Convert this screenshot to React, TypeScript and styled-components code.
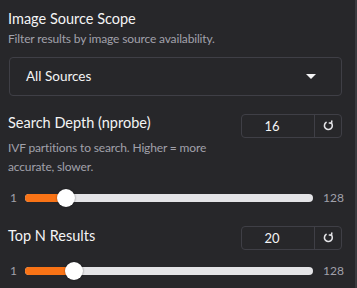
import React from "react";
import styled, { createGlobalStyle } from "styled-components";

const Global = createGlobalStyle`
  html, body { margin: 0; padding: 0; background: #27272a; }
  body { font-family: Lato, "Noto Sans", sans-serif; color: #f4f4f5; }
  * { box-sizing: border-box; }
`;

const Panel = styled.div`
  width: 357px;
  height: 288px;
  background: #27272a;
  border-right: 2px solid #3a3a3f;
  padding: 9px 13px 0 8px;
  display: flex;
  flex-direction: column;
  overflow: hidden;
`;

const Block = styled.section<{ $gap?: number }>`
  display: flex;
  flex-direction: column;
  margin-bottom: ${(p) => p.$gap ?? 0}px;
`;

const Title = styled.div<{ $top?: number }>`
  margin-top: ${(p) => p.$top ?? 0}px;
  font-size: 14.5px;
  line-height: 20px;
  color: #f4f4f5;
`;

const Info = styled.div<{ $top?: number; $width?: number }>`
  margin-top: ${(p) => p.$top ?? 0}px;
  width: ${(p) => (p.$width ? `${p.$width}px` : "auto")};
  font-size: 12px;
  letter-spacing: -0.15px;
  line-height: 19.5px;
  color: #a1a1aa;
`;

const Select = styled.div`
  margin-top: 8px;
  margin-left: 1px;
  height: 39px;
  border: 1px solid #3f3f46;
  border-radius: 4px;
  display: flex;
  align-items: center;
  justify-content: space-between;
  padding: 0 25px 0 16px;
  font-size: 13.5px;
  color: #f4f4f5;
`;

const Caret = styled.span`
  width: 0;
  height: 0;
  border-left: 5px solid transparent;
  border-right: 5px solid transparent;
  border-top: 5px solid #f4f4f5;
`;

const HeaderRow = styled.div`
  display: flex;
  justify-content: space-between;
  align-items: flex-start;
`;

const NumBox = styled.div<{ $top: number }>`
  margin-top: ${(p) => p.$top}px;
  width: 101px;
  height: 24px;
  border: 1px solid #3f3f46;
  border-radius: 4px;
  display: flex;
  flex-shrink: 0;
`;

const NumValue = styled.div`
  flex: 1;
  display: flex;
  align-items: center;
  justify-content: center;
  padding-right: 12px;
  font-size: 13px;
  color: #f4f4f5;
  border-right: 1px solid #3f3f46;
`;

const Reset = styled.div`
  width: 26px;
  display: flex;
  align-items: center;
  justify-content: center;
  color: #e4e4e7;
`;

const Spacer = styled.div<{ $h: number }>`
  height: ${(p) => p.$h}px;
`;

const SliderRow = styled.div`
  display: flex;
  align-items: center;
  height: 18px;
  font-size: 12px;
  color: #a1a1aa;
  margin-left: 2px;
`;

const Bound = styled.span<{ $w: number }>`
  width: ${(p) => p.$w}px;
  flex-shrink: 0;
`;

const Track = styled.div`
  position: relative;
  flex: 1;
  height: 8px;
  border-radius: 4px;
  background: #e4e4e7;
  margin-right: 10px;
`;

const Fill = styled.div`
  position: absolute;
  left: 0;
  top: 0;
  bottom: 0;
  border-radius: 4px;
  background: #f97316;
`;

const Thumb = styled.div`
  position: absolute;
  top: 50%;
  width: 18px;
  height: 18px;
  margin-left: -9px;
  margin-top: -9px;
  border-radius: 50%;
  background: #ffffff;
  box-shadow: 0 0 2px rgba(0, 0, 0, 0.5);
`;

function ResetIcon() {
  return (
    <svg width="11" height="11" viewBox="0 0 12 12" fill="none" stroke="currentColor" strokeWidth="1.7" strokeLinecap="round" strokeLinejoin="round">
      <path d="M3.4 2.6 A4.3 4.3 0 1 0 9 3.2" />
      <path d="M9.6 1.2 L9.2 3.6 L6.9 3.3" />
    </svg>
  );
}

function Slider({ value, min, max }: { value: number; min: number; max: number }) {
  const frac = (value - min) / (max - min);
  const pos = `calc(9px + (100% - 18px) * ${frac})`;
  return (
    <SliderRow>
      <Bound $w={15}>{min}</Bound>
      <Track>
        <Fill style={{ width: pos }} />
        <Thumb style={{ left: pos }} />
      </Track>
      <Bound $w={19}>{max}</Bound>
    </SliderRow>
  );
}

function NumberField({ value, top }: { value: number; top: number }) {
  return (
    <NumBox $top={top}>
      <NumValue>{value}</NumValue>
      <Reset>
        <ResetIcon />
      </Reset>
    </NumBox>
  );
}

export default function App() {
  return (
    <>
      <Global />
      <Panel>
        <Block $gap={13}>
          <Title>Image Source Scope</Title>
          <Info>Filter results by image source availability.</Info>
          <Select>
            <span>All Sources</span>
            <Caret />
          </Select>
        </Block>
        <Block $gap={19}>
          <HeaderRow>
            <div>
              <Title $top={4}>Search Depth (nprobe)</Title>
              <Info $top={5} $width={215}>
                IVF partitions to search. Higher = more accurate, slower.
              </Info>
            </div>
            <NumberField value={16} top={5} />
          </HeaderRow>
          <Spacer $h={12} />
          <Slider value={16} min={1} max={128} />
        </Block>
        <Block>
          <HeaderRow>
            <Title $top={0}>Top N Results</Title>
            <NumberField value={20} top={0} />
          </HeaderRow>
          <Spacer $h={12} />
          <Slider value={20} min={1} max={128} />
        </Block>
      </Panel>
    </>
  );
}
